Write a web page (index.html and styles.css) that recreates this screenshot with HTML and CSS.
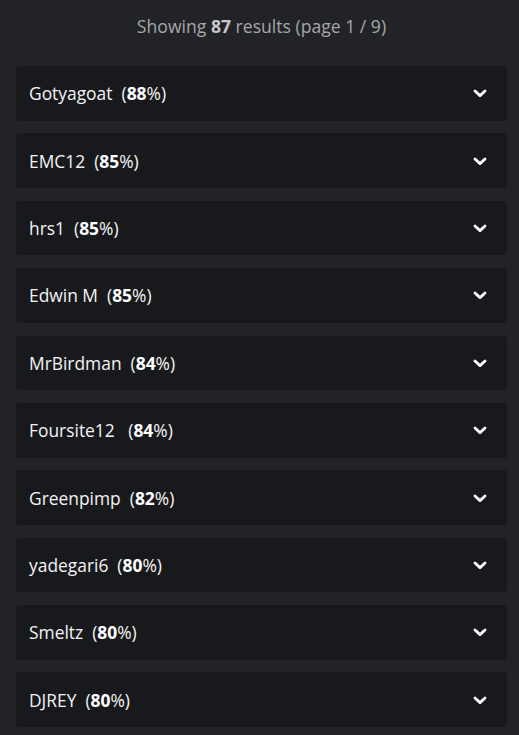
FILE: index.html
```html
<!DOCTYPE html>
<html>
<head>
<meta charset="utf-8">
<link rel="stylesheet" href="styles.css">
</head>
<body>
<div class="page">
  <div class="summary">Showing <b>87</b> results (page 1 / 9)</div>
  <div class="list">
    <div class="item"><span class="label">Gotyagoat&nbsp; (<b>88</b>%)</span><svg class="chev" viewBox="0 0 14 10"><path d="M2 3 L7 7.6 L12 3"/></svg></div>
    <div class="item"><span class="label">EMC12&nbsp; (<b>85</b>%)</span><svg class="chev" viewBox="0 0 14 10"><path d="M2 3 L7 7.6 L12 3"/></svg></div>
    <div class="item"><span class="label">hrs1&nbsp; (<b>85</b>%)</span><svg class="chev" viewBox="0 0 14 10"><path d="M2 3 L7 7.6 L12 3"/></svg></div>
    <div class="item"><span class="label">Edwin M&nbsp; (<b>85</b>%)</span><svg class="chev" viewBox="0 0 14 10"><path d="M2 3 L7 7.6 L12 3"/></svg></div>
    <div class="item"><span class="label">MrBirdman&nbsp; (<b>84</b>%)</span><svg class="chev" viewBox="0 0 14 10"><path d="M2 3 L7 7.6 L12 3"/></svg></div>
    <div class="item"><span class="label">Foursite12&nbsp;&nbsp; (<b>84</b>%)</span><svg class="chev" viewBox="0 0 14 10"><path d="M2 3 L7 7.6 L12 3"/></svg></div>
    <div class="item"><span class="label">Greenpimp&nbsp; (<b>82</b>%)</span><svg class="chev" viewBox="0 0 14 10"><path d="M2 3 L7 7.6 L12 3"/></svg></div>
    <div class="item"><span class="label">yadegari6&nbsp; (<b>80</b>%)</span><svg class="chev" viewBox="0 0 14 10"><path d="M2 3 L7 7.6 L12 3"/></svg></div>
    <div class="item"><span class="label">Smeltz&nbsp; (<b>80</b>%)</span><svg class="chev" viewBox="0 0 14 10"><path d="M2 3 L7 7.6 L12 3"/></svg></div>
    <div class="item"><span class="label">DJREY&nbsp; (<b>80</b>%)</span><svg class="chev" viewBox="0 0 14 10"><path d="M2 3 L7 7.6 L12 3"/></svg></div>
  </div>
</div>
</body>
</html>
```
FILE: styles.css
```css
html, body {
  margin: 0;
  padding: 0;
  background: #222327;
}
body {
  font-family: "Open Sans", "Noto Sans", sans-serif;
  color: #ffffff;
}
.page {
  padding: 13px 12px 0 16px;
}
.summary {
  text-align: center;
  font-size: 17.6px;
  line-height: 26px;
  color: #a6a7a9;
  margin-bottom: 27px;
}
.summary b {
  font-weight: 700;
  color: #c8c9cb;
}
.list {
  display: flex;
  flex-direction: column;
  gap: 12.7px;
}
.item {
  height: 54.7px;
  box-sizing: border-box;
  background: #18191c;
  border-radius: 3px;
  display: flex;
  align-items: center;
  justify-content: space-between;
  padding: 0 20px 0 13px;
}
.label {
  font-size: 17.4px;
  color: #f4f4f4;
}
.label b {
  font-weight: 700;
  color: #ffffff;
}
.chev {
  width: 14px;
  height: 10px;
  fill: none;
  stroke: #ffffff;
  stroke-width: 2.8;
  stroke-linecap: round;
  stroke-linejoin: round;
}
```
